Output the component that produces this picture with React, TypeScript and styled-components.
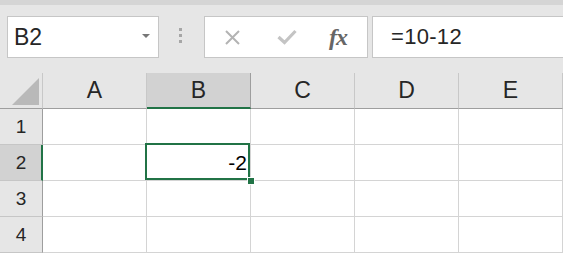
import React from "react";
import styled, { createGlobalStyle } from "styled-components";

const Global = createGlobalStyle`
  html, body { margin: 0; padding: 0; background: #e6e6e6; overflow: hidden; }
  body { font-family: "Liberation Sans", Arial, sans-serif; }
`;

const GREEN = "#217346";

const Page = styled.div`
  width: 563px;
  height: 253px;
  overflow: hidden;
  background: #e6e6e6;
  display: flex;
  flex-direction: column;
`;

const TopStrip = styled.div`
  height: 5px;
  background: #d5d5d5;
  flex: none;
`;

const Toolbar = styled.div`
  display: flex;
  align-items: center;
  height: 42px;
  margin-top: 11px;
  margin-bottom: 15px;
  padding-left: 7px;
  flex: none;
`;

const Box = styled.div<{ $w?: number }>`
  box-sizing: border-box;
  height: 42px;
  ${(p) => (p.$w ? `width: ${p.$w}px; flex: none;` : "flex: 1; margin-right: -20px;")}
  background: #fff;
  border: 1px solid #c6c6c6;
  display: flex;
  align-items: center;
  position: relative;
`;

const NameText = styled.span`
  font-size: 23px;
  color: #262626;
  padding-left: 6px;
  flex: 1;
`;

const DropArrow = styled.span`
  width: 0;
  height: 0;
  border-left: 4px solid transparent;
  border-right: 4px solid transparent;
  border-top: 4px solid #777;
  margin-right: 8px;
  margin-top: -2px;
`;

const Grip = styled.div`
  width: 3px;
  margin: 0 22px 0 20px;
  display: flex;
  flex-direction: column;
  gap: 3px;
  margin-top: -3px;
`;

const GripDot = styled.span`
  width: 3px;
  height: 3px;
  background: #a6a6a6;
`;

const IconRow = styled.div`
  display: flex;
  align-items: center;
  width: 100%;
  height: 100%;
`;

const IconSlot = styled.div<{ $left: number }>`
  margin-left: ${(p) => p.$left}px;
  display: flex;
  align-items: center;
`;

const Fx = styled.span`
  font-family: "Liberation Serif", "Times New Roman", serif;
  font-style: italic;
  font-weight: bold;
  font-size: 24px;
  color: #666;
  letter-spacing: -1px;
  margin-top: 1px;
`;

const FormulaText = styled.span`
  font-size: 22px;
  color: #262626;
  padding-left: 18px;
  letter-spacing: 0.3px;
`;

const Sheet = styled.div`
  display: grid;
  grid-template-columns: 43px repeat(5, 104px);
  grid-auto-rows: 36px;
  flex: none;
`;

const Corner = styled.div`
  box-sizing: border-box;
  border-right: 1px solid #c8c8c8;
  border-bottom: 1px solid #9e9e9e;
  position: relative;
`;

const ColHeader = styled.div<{ $sel?: boolean }>`
  box-sizing: border-box;
  display: flex;
  align-items: center;
  justify-content: center;
  font-size: 23px;
  color: #262626;
  background: ${(p) => (p.$sel ? "#d2d2d2" : "#e6e6e6")};
  border-right: 1px solid ${(p) => (p.$sel ? "#9e9e9e" : "#c8c8c8")};
  border-bottom: ${(p) => (p.$sel ? `2px solid ${GREEN}` : "1px solid #9e9e9e")};
  padding-top: ${(p) => (p.$sel ? "1px" : "0")};
`;

const RowHeader = styled.div<{ $sel?: boolean }>`
  box-sizing: border-box;
  display: flex;
  align-items: center;
  justify-content: center;
  font-size: 19px;
  color: #262626;
  background: ${(p) => (p.$sel ? "#d2d2d2" : "#e6e6e6")};
  border-right: ${(p) => (p.$sel ? `2px solid ${GREEN}` : "1px solid #9e9e9e")};
  border-bottom: 1px solid #c6c6c6;
  padding-left: ${(p) => (p.$sel ? "1px" : "0")};
`;

const Cell = styled.div<{ $sel?: boolean }>`
  box-sizing: border-box;
  background: #fff;
  border-right: 1px solid #d4d4d4;
  border-bottom: 1px solid #d4d4d4;
  display: flex;
  align-items: center;
  justify-content: flex-end;
  padding-right: 3px;
  font-size: 21px;
  color: #000;
  position: relative;
  ${(p) => (p.$sel ? "z-index: 2;" : "")}
`;

const Selection = styled.div`
  position: absolute;
  left: -2px;
  top: -2px;
  right: 0;
  bottom: 0;
  border: 2px solid ${GREEN};
  pointer-events: none;
`;

const Handle = styled.div`
  position: absolute;
  right: -4px;
  bottom: -4px;
  width: 6px;
  height: 6px;
  background: ${GREEN};
  outline: 1px solid #fff;
`;

const Triangle = () => (
  <svg width="43" height="36" style={{ position: "absolute", left: 0, top: 0 }}>
    <polygon points="12,32 39,32 39,5" fill="#b9b9b9" />
  </svg>
);

const cols = ["A", "B", "C", "D", "E"];
const rows = [1, 2, 3, 4];

export default function App() {
  return (
    <Page>
      <Global />
      <TopStrip />
      <Toolbar>
        <Box $w={152}>
          <NameText>B2</NameText>
          <DropArrow />
        </Box>
        <Grip>
          <GripDot />
          <GripDot />
          <GripDot />
        </Grip>
        <Box $w={164}>
          <IconRow>
            <IconSlot $left={19}>
              <svg width="17" height="17" viewBox="0 0 17 17">
                <path d="M2 2 L15 15 M15 2 L2 15" stroke="#b3b3b3" strokeWidth="2" fill="none" />
              </svg>
            </IconSlot>
            <IconSlot $left={36}>
              <svg width="20" height="16" viewBox="0 0 20 16">
                <path d="M1.5 8 L7.5 13.5 L18.5 2" stroke="#c4c4c4" strokeWidth="3.2" fill="none" />
              </svg>
            </IconSlot>
            <IconSlot $left={32}>
              <Fx>fx</Fx>
            </IconSlot>
          </IconRow>
        </Box>
        <Box style={{ marginLeft: 4 }}>
          <FormulaText>=10-12</FormulaText>
        </Box>
      </Toolbar>
      <Sheet>
        <Corner>
          <Triangle />
        </Corner>
        {cols.map((c) => (
          <ColHeader key={c} $sel={c === "B"}>
            {c}
          </ColHeader>
        ))}
        {rows.map((r) => (
          <React.Fragment key={r}>
            <RowHeader $sel={r === 2}>{r}</RowHeader>
            {cols.map((c) => {
              const sel = r === 2 && c === "B";
              return (
                <Cell key={c} $sel={sel}>
                  {sel && (
                    <>
                      -2
                      <Selection />
                      <Handle />
                    </>
                  )}
                </Cell>
              );
            })}
          </React.Fragment>
        ))}
      </Sheet>
    </Page>
  );
}
